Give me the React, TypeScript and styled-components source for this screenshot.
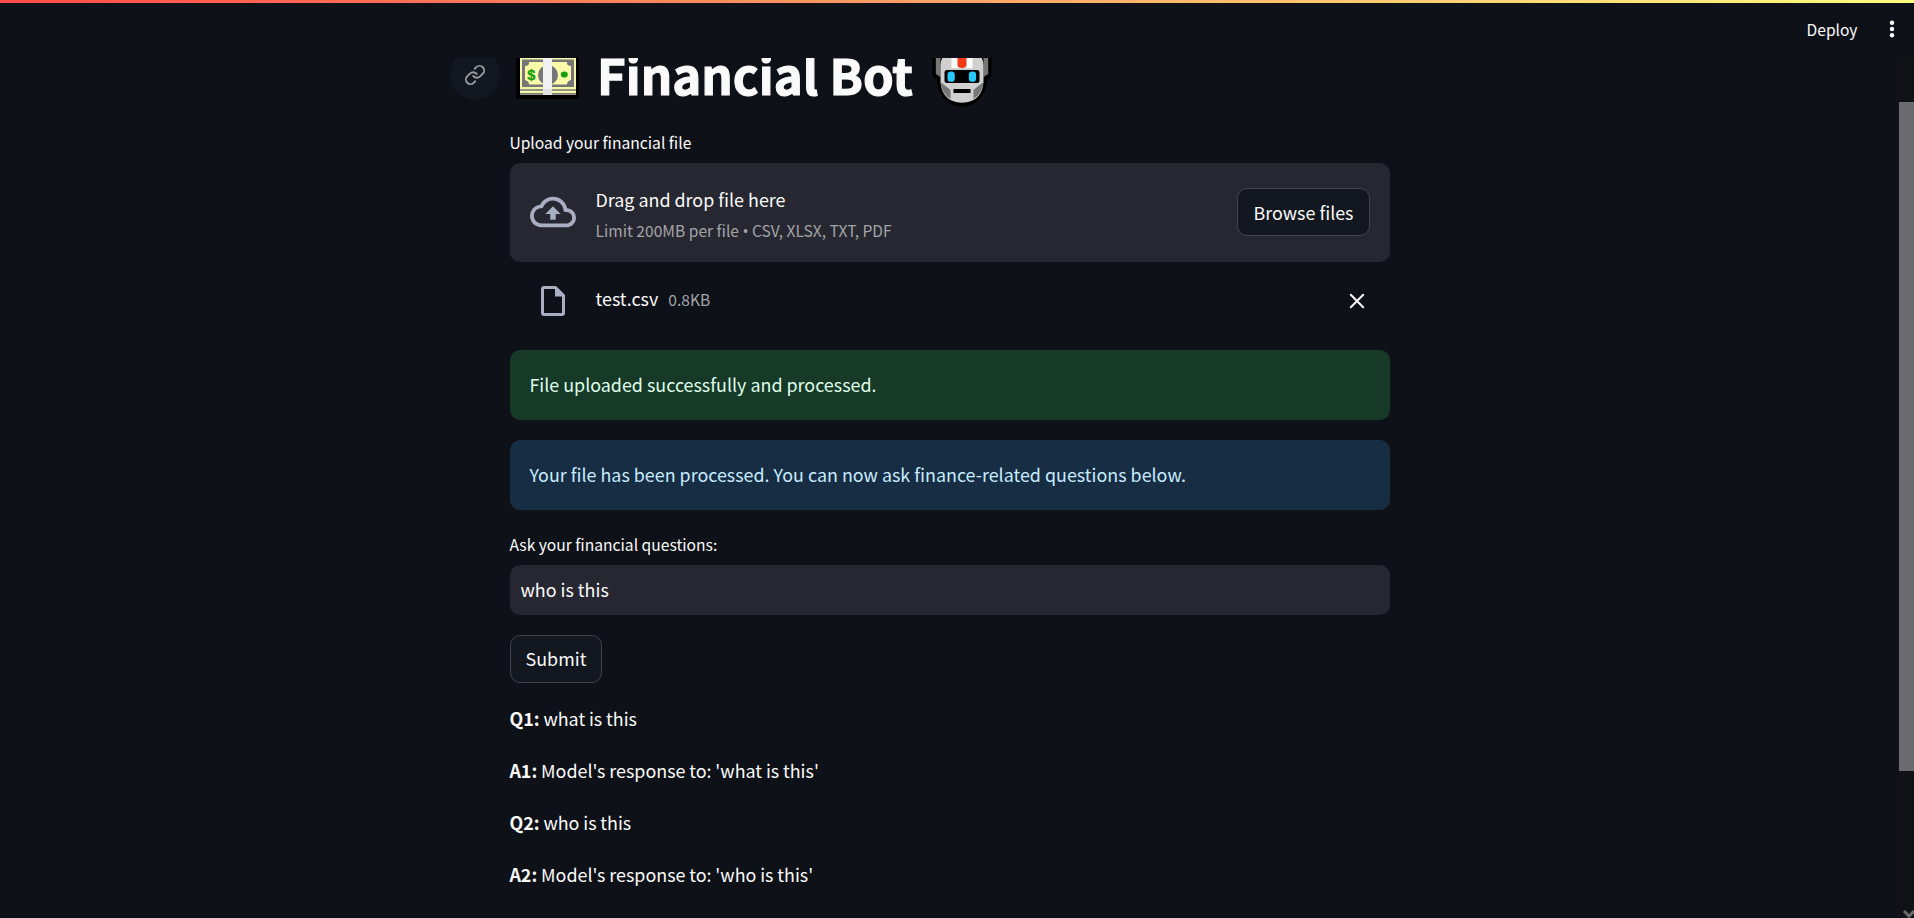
import React from "react";
import styled, { createGlobalStyle } from "styled-components";

const GlobalStyle = createGlobalStyle`
  * { box-sizing: border-box; }
  body { margin: 0; background: #0e1117; overflow: hidden; }
`;

const Page = styled.div`
  display: flex;
  flex-direction: column;
  width: 100%;
  height: 918px;
  overflow: hidden;
  background: #0e1117;
  color: #fafafa;
  font-family: "Noto Sans CJK SC", "Noto Sans", sans-serif;
  font-size: 17.9px;
  line-height: 32px;
`;

const Decoration = styled.div`
  flex: none;
  height: 3px;
  background: linear-gradient(90deg, #ff4b4b, #fffd80);
`;

const Header = styled.header`
  flex: none;
  height: 55px;
  display: flex;
  justify-content: flex-end;
  align-items: center;
  padding: 0 17px 3px 0;
  gap: 29.5px;
  font-size: 15.6px;
`;

const Body = styled.div`
  flex: 1;
  min-height: 0;
  display: flex;
`;

const Main = styled.main`
  flex: 1;
  overflow: hidden;
  padding: 0 509px 0 510px;
`;

const ScrollTrack = styled.div`
  width: 15px;
  background: #111216;
  padding-top: 44px;
  display: flex;
  flex-direction: column;
  justify-content: space-between;
  overflow: hidden;
`;

const ScrollThumb = styled.div`
  height: 669px;
  background: #6b6b6f;
`;

const Title = styled.h1`
  display: flex;
  align-items: flex-start;
  margin: -8px 0 0 -60px;
  height: 83px;
  font-size: 49.2px;
  line-height: 47px;
  font-weight: 700;
`;

const Anchor = styled.a`
  display: flex;
  align-items: center;
  justify-content: center;
  width: 50px;
  height: 50px;
  margin-right: 16px;
  border-radius: 50%;
  background: #13171f;
  color: #9b9da1;
`;

const TitleText = styled.span`
  display: block;
  width: 312px;
  margin: 0 23px 0 18px;
  white-space: nowrap;
  -webkit-text-stroke: 1.1px currentColor;
`;

const Label = styled.label<{ $above?: number; $below: number }>`
  display: block;
  font-size: 15.63px;
  line-height: 19px;
  margin: ${(p) => p.$above ?? 0}px 0 ${(p) => p.$below}px -0.6px;
`;

const Dropzone = styled.section`
  height: 99px;
  display: flex;
  align-items: center;
  padding: 0 20px 1px;
  border-radius: 10px;
  background: #262730;
`;

const IconSlot = styled.div`
  display: flex;
  justify-content: center;
  width: 46px;
  margin-right: 19.5px;
  color: #a9aec3;
`;

const DropText = styled.div`
  flex: 1;
  display: flex;
  flex-direction: column;
  line-height: 32px;
  padding-top: 3px;
`;

const Hint = styled.small`
  font-size: 15.6px;
  line-height: 30px;
  color: #a3a4a9;
`;

const Bullet = styled.span`
  font-family: "Open Sans", sans-serif;
  font-size: 16px;
  line-height: 1;
`;

const Button = styled.button<{ $width: number; $lift?: number }>`
  display: block;
  width: ${(p) => p.$width}px;
  height: 48px;
  padding: 0 0 ${(p) => p.$lift ?? 0}px;
  border: 1px solid #41444c;
  border-radius: 10px;
  background: #131720;
  color: #fafafa;
  font: inherit;
`;

const FileRow = styled.div`
  display: flex;
  align-items: center;
  height: 78px;
  margin-bottom: 10px;
  padding: 0 20px;
`;

const FileInfo = styled.div`
  flex: 1;
  display: flex;
  align-items: baseline;
  gap: 10px;
  padding-bottom: 6px;
`;

const CloseSlot = styled.div`
  display: flex;
  margin-right: 5px;
`;

const Alert = styled.div<{ $kind: "success" | "info" }>`
  height: 70px;
  display: flex;
  align-items: center;
  margin-bottom: 20px;
  padding: 0 19.4px 2px;
  border-radius: 10px;
  background: ${(p) => (p.$kind === "success" ? "#173928" : "#172d43")};
  color: ${(p) => (p.$kind === "success" ? "#dffde9" : "#c7ebff")};
`;

const Question = styled.input`
  display: block;
  width: 100%;
  height: 50px;
  margin-bottom: 20px;
  padding: 0 10.5px 3px;
  border: 0;
  border-radius: 10px;
  outline: 0;
  background: #262730;
  color: #fafafa;
  font: inherit;
`;

const Log = styled.div`
  display: flex;
  flex-direction: column;
  gap: 20px;
  margin: 19px 0 0 -0.6px;
`;

const Line = styled.p`
  margin: 0;
  word-spacing: -0.2px;
`;

const MoneyIcon = () => (
  <svg width="63" height="49" viewBox="516 50 63 49">
    <rect x="516" y="50" width="63" height="49" fill="#000" />
    <rect x="520" y="54" width="56" height="41" fill="#f4f6a8" />
    <rect x="522" y="59.5" width="52" height="27.5" fill="#767676" />
    <path d="M529 62H567V63Q567 66 571 66V80Q567 81 567 84.500H529Q529 81 525 80V66Q529 66 529 63Z" fill="#fbfbaa" />
    <ellipse cx="548" cy="75" rx="10" ry="10" fill="#767676" />
    <text x="531.2" y="79.500" textAnchor="middle" fontFamily="Liberation Sans" fontWeight="700" fontSize="14.500" fill="#16a010" stroke="#16a010" strokeWidth="0.400">$</text>
    <ellipse cx="564.300" cy="74.500" rx="3.500" ry="3.100" fill="#16a010" />
    <path d="M520 90H576M520 93.800H576" stroke="#767676" strokeWidth="1.700" />
    <rect x="543" y="54" width="9" height="41" fill="#f2f2f2" />
    <rect x="543" y="89" width="9" height="6" fill="#e2e2e2" />
  </svg>
);

const RobotIcon = () => (
  <svg width="60" height="57" viewBox="932.5 50 60 57">
    <path d="M933 50H992V75Q991 78 988 79C987 94 978 106.7 962.5 106.7S938 94 937.500 79Q934 78 933 75Z" fill="#000" />
    <path d="M936.300 50H941V77L936.300 74ZM988.700 50H984V77L988.700 74Z" fill="#777" />
    <path d="M941 66Q941 57 948 52H977Q984 57 984 66V80C984 94 976 102.700 962.500 102.700S941 94 941 80Z" fill="#d0d0d0" />
    <path d="M941 82L951 90V99Q942 93 941 82ZM984 82L974 90V99Q983 93 984 82Z" fill="#777" />
    <path d="M952 50H973V68H952Z" fill="#fff" />
    <path d="M958 50H967V65Q967 68 962.500 68T958 65Z" fill="#f23a17" />
    <rect x="945" y="70" width="35" height="13" rx="2.500" fill="#000" />
    <rect x="948" y="71.500" width="7.300" height="10.300" rx="3.400" fill="#28c8fa" />
    <rect x="969.300" y="71.500" width="7.300" height="10.300" rx="3.400" fill="#28c8fa" />
    <rect x="954" y="89" width="17" height="4" fill="#000" />
  </svg>
);

const LinkIcon = () => (
  <svg width="22" height="22" viewBox="0 0 24 24" fill="none" stroke="currentColor" strokeWidth="2" strokeLinecap="round" strokeLinejoin="round">
    <path d="M10 13a5 5 0 0 0 7.540.540l3-3a5 5 0 0 0-7.070-7.070l-1.720 1.710" />
    <path d="M14 11a5 5 0 0 0-7.540-.540l-3 3a5 5 0 0 0 7.070 7.070l1.710-1.710" />
  </svg>
);

const CloudIcon = () => (
  <svg width="46" height="46" viewBox="0 0 24 24" fill="currentColor">
    <path d="M19.350 10.040A7.490 7.490 0 0 0 12 4C9.110 4 6.600 5.640 5.350 8.040A5.994 5.994 0 0 0 0 14c0 3.310 2.690 6 6 6h13c2.760 0 5-2.240 5-5 0-2.640-2.050-4.780-4.650-4.960zM19 18H6c-2.210 0-4-1.790-4-4 0-2.050 1.530-3.760 3.560-3.970l1.070-.110.500-.950A5.469 5.469 0 0 1 12 6c2.620 0 4.880 1.860 5.390 4.430l.300 1.500 1.530.110A2.980 2.980 0 0 1 22 15c0 1.650-1.350 3-3 3zM8 13h2.550v3h2.900v-3H16l-4-4z" />
  </svg>
);

const FileIcon = () => (
  <svg width="24" height="30" viewBox="0 0 24 30">
    <path d="M3 1.500H14.500L22.500 9.500V27Q22.500 28.500 21 28.500H3Q1.500 28.500 1.500 27V3Q1.500 1.500 3 1.500Z" fill="none" stroke="currentColor" strokeWidth="3" strokeLinejoin="round" />
    <path d="M14 1H15.500L23 8.500V10.500H14Z" fill="currentColor" />
  </svg>
);

const CloseIcon = () => (
  <svg width="16" height="16" viewBox="0 0 16 16" fill="none" stroke="#fafafa" strokeWidth="2" strokeLinecap="round">
    <path d="M1.800 1.800L14.200 14.200M14.200 1.800L1.800 14.200" />
  </svg>
);

const MenuIcon = () => (
  <svg width="10" height="20" viewBox="0 0 10 20" fill="#fafafa">
    <circle cx="5" cy="3.700" r="2.200" />
    <circle cx="5" cy="10" r="2.200" />
    <circle cx="5" cy="16.300" r="2.200" />
  </svg>
);

const ArrowDown = () => (
  <svg width="15" height="8" viewBox="0 0 15 8" fill="none" stroke="#6b6b6f" strokeWidth="3">
    <path d="M5 1L10 6.200L15 1" />
  </svg>
);

const entries = [
  ["Q1:", "what is this"],
  ["A1:", "Model's response to: 'what is this'"],
  ["Q2:", "who is this"],
  ["A2:", "Model's response to: 'who is this'"],
];

export default function App() {
  return (
    <Page>
      <GlobalStyle />
      <Decoration />
      <Header>
        <span>Deploy</span>
        <MenuIcon />
      </Header>
      <Body>
        <Main>
          <Title>
            <Anchor><LinkIcon /></Anchor>
            <MoneyIcon />
            <TitleText>Financial Bot</TitleText>
            <RobotIcon />
          </Title>
          <Label $below={11}>Upload your financial file</Label>
          <Dropzone>
            <IconSlot><CloudIcon /></IconSlot>
            <DropText>
              <span>Drag and drop file here</span>
              <Hint>Limit 200MB per file <Bullet>•</Bullet> CSV, XLSX, TXT, PDF</Hint>
            </DropText>
            <Button $width={133}>Browse files</Button>
          </Dropzone>
          <FileRow>
            <IconSlot><FileIcon /></IconSlot>
            <FileInfo>
              <span>test.csv</span>
              <Hint>0.8KB</Hint>
            </FileInfo>
            <CloseSlot><CloseIcon /></CloseSlot>
          </FileRow>
          <Alert $kind="success">File uploaded successfully and processed.</Alert>
          <Alert $kind="info">Your file has been processed. You can now ask finance-related questions below.</Alert>
          <Label $above={25} $below={11}>Ask your financial questions:</Label>
          <Question defaultValue="who is this" />
          <Button $width={92} $lift={2}>Submit</Button>
          <Log>
            {entries.map(([tag, text]) => (
              <Line key={tag}><strong>{tag}</strong> {text}</Line>
            ))}
          </Log>
        </Main>
        <ScrollTrack>
          <ScrollThumb />
          <ArrowDown />
        </ScrollTrack>
      </Body>
    </Page>
  );
}
